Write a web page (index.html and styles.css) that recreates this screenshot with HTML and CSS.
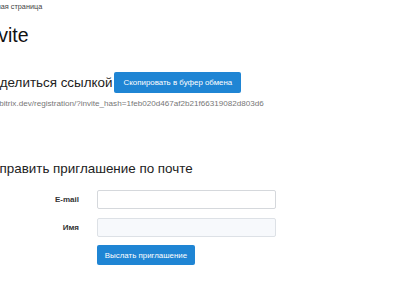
FILE: index.html
```html
<!DOCTYPE html>
<html>
<head>
<meta charset="utf-8">
<link rel="stylesheet" href="styles.css">
</head>
<body>
<div class="page">
  <div class="crumbs">Главная страница</div>
  <h1 class="title">Invite</h1>
  <div class="share">
    <h2 class="heading">Поделиться ссылкой</h2>
    <button class="btn btn-copy" type="button">Скопировать в буфер обмена</button>
  </div>
  <div class="link">test.bitrix.dev/registration/?invite_hash=1feb020d467af2b21f66319082d803d6</div>
  <h2 class="heading heading-mail">Отправить приглашение по почте</h2>
  <form class="form">
    <label class="label">E-mail</label>
    <input class="input" type="text">
    <label class="label">Имя</label>
    <input class="input input-alt" type="text">
    <span></span>
    <div class="actions"><button class="btn btn-send" type="button">Выслать приглашение</button></div>
  </form>
</div>
</body>
</html>
```
FILE: styles.css
```css
html, body {
  margin: 0;
  padding: 0;
  background: #ffffff;
  overflow: hidden;
}
body {
  font-family: "Liberation Sans", Arial, sans-serif;
  color: #222;
}
.page {
  margin-left: -17px;
  padding-top: 2px;
}
.crumbs {
  font-size: 7.3px;
  color: #444;
  line-height: 10px;
  margin-left: -2px;
}
.title {
  font-size: 19.5px;
  font-weight: normal;
  margin: 12px 0 0 -1px;
  line-height: 22px;
  color: #111;
}
.share {
  display: flex;
  align-items: center;
  gap: 2px;
  margin-top: 26px;
}
.heading {
  font-size: 13.4px;
  font-weight: normal;
  margin: 0;
  line-height: 18px;
  color: #222;
}
.btn {
  background: #1f85d4;
  color: #fff;
  border: none;
  border-radius: 2px;
  font-family: "Liberation Sans", Arial, sans-serif;
  font-size: 7.9px;
  padding: 0 8px;
  height: 21px;
  cursor: pointer;
}
.btn-copy {
  width: 127px;
}
.link {
  font-size: 8.1px;
  color: #777;
  margin: 6px 0 0 1px;
  line-height: 10px;
}
.heading-mail {
  margin-top: 51px;
}
.form {
  display: grid;
  grid-template-columns: 96px 179px;
  column-gap: 18px;
  row-gap: 9px;
  align-items: center;
  margin-top: 12px;
}
.label {
  text-align: right;
  font-size: 8px;
  font-weight: bold;
  color: #333;
}
.input {
  box-sizing: border-box;
  height: 19px;
  width: 179px;
  border: 1px solid #d5d8dc;
  border-radius: 2px;
  background: #fff;
  margin: 0;
  padding: 0 4px;
}
.input-alt {
  background: #f7f9fc;
  border-color: #dde1e6;
}
.actions {
  display: flex;
  margin-top: -1px;
}
.btn-send {
  height: 20px;
  width: 98px;
  padding: 0;
}
```
